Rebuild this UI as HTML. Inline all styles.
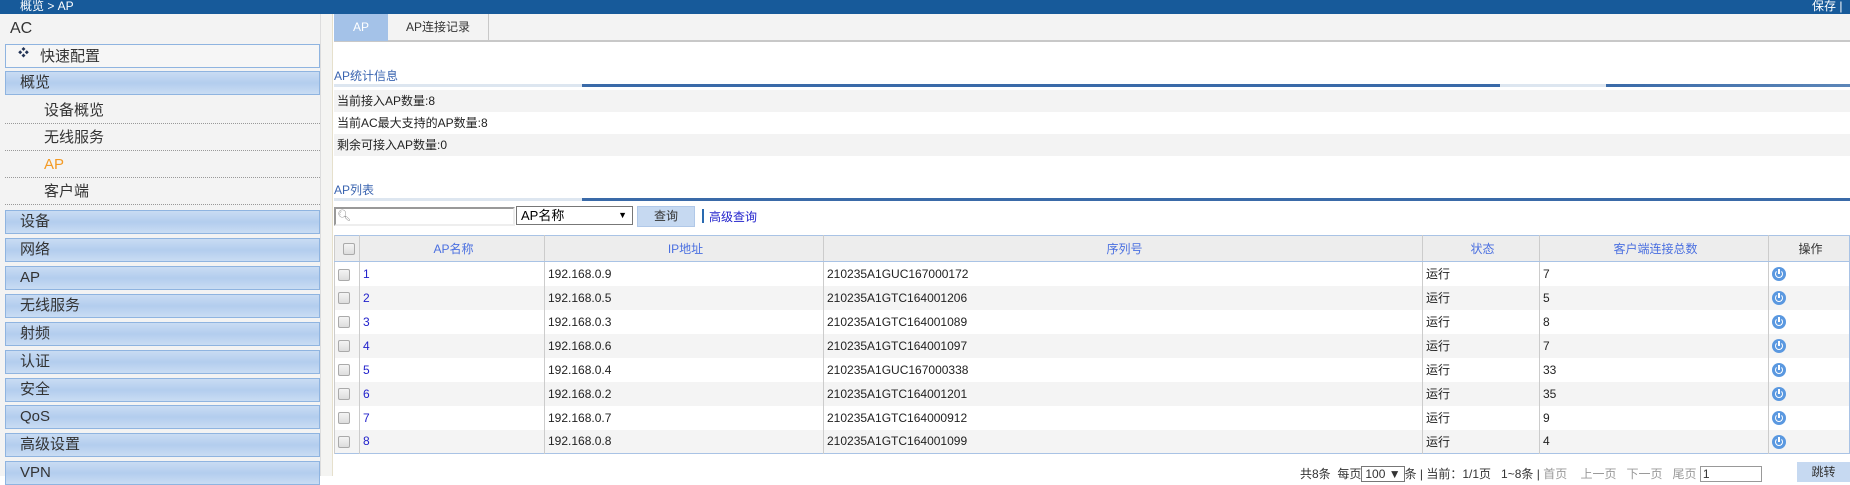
<!DOCTYPE html>
<html><head><meta charset="utf-8"><style>
*{box-sizing:border-box;margin:0;padding:0}
body{width:1850px;height:476px;overflow:hidden;background:#fff;font-family:"Liberation Sans","Noto Sans CJK SC",sans-serif;position:relative}
.abs{position:absolute}
#top{left:0;top:0;width:1850px;height:14px;background:#175a9a;color:#fff;font-size:12px;line-height:13px}
#side{left:0;top:14px;width:321px;height:462px;background:#f3f3f3;border-right:1px solid #ddd}
#gap{left:321px;top:14px;width:12px;height:462px;background:#f4f4f2;border-right:1px solid #e6e0cc}
.hd{position:absolute;left:5px;width:315px;height:24px;border:1px solid #8fb4e0;background:linear-gradient(#c9dcf3,#b3cdee 50%,#c9dcf3);font-size:15px;line-height:22px;padding-left:14px;color:#333}
.sub{position:absolute;left:5px;width:315px;height:27px;border-bottom:1px dotted #999;font-size:15px;line-height:27px;padding-left:39px;color:#333}
.row{position:absolute;left:334px;width:1516px;height:22px;font-size:12px;line-height:22px;padding-left:3px;color:#222}
.line{position:absolute;height:3px}
table{position:absolute;left:334px;top:235px;width:1516px;border-collapse:collapse;font-size:12px;border:1px solid #a9c3e5}
td{height:24px;border-left:1px solid #ccc;padding-left:3px;color:#222;white-space:nowrap}
tr.h td{height:26px;background:#ededed;text-align:center;color:#4a6fe0;border-bottom:1px solid #a9c3e5}
tr:nth-child(odd):not(.h) td{background:#f4f4f4}
.cb{display:inline-block;width:12px;height:12px;border:1px solid #aaa;border-radius:2px;background:linear-gradient(#f4f4f4,#ddd);vertical-align:middle}
.n{color:#22c}
.pw{display:inline-block;width:14px;height:14px;border-radius:7px;background:#5a98e0;vertical-align:middle;position:relative}
.pw:after{content:"";position:absolute;left:3px;top:3px;width:6px;height:6px;border:1.5px solid #fff;border-top-color:transparent;border-radius:50%}
.pw:before{content:"";position:absolute;left:6px;top:2px;width:2px;height:5px;background:#fff;z-index:1}
</style></head><body>
<div id="top" class="abs"><span style="position:absolute;left:20px">概览 &gt; AP</span><span style="position:absolute;left:1812px">保存 |</span></div>
<div id="side" class="abs">
<div style="position:absolute;left:10px;top:6px;font-size:16px;color:#333">AC</div>
<div style="position:absolute;left:5px;top:30px;width:315px;height:24px;border:1px solid #8fb4e0;background:#f6f6f6;font-size:15px;line-height:24px;padding-left:34px;color:#333"><span style="position:absolute;left:12px;top:-4px;font-size:11px;color:#235">❖</span>快速配置</div>
<div class="hd" style="top:57px">概览</div>
<div class="sub" style="top:83px">设备概览</div>
<div class="sub" style="top:110px">无线服务</div>
<div class="sub" style="top:137px;color:#f39a24">AP</div>
<div class="sub" style="top:164px">客户端</div>
<div class="hd" style="top:196px">设备</div>
<div class="hd" style="top:224px">网络</div>
<div class="hd" style="top:252px">AP</div>
<div class="hd" style="top:280px">无线服务</div>
<div class="hd" style="top:308px">射频</div>
<div class="hd" style="top:336px">认证</div>
<div class="hd" style="top:364px">安全</div>
<div class="hd" style="top:391px">QoS</div>
<div class="hd" style="top:419px">高级设置</div>
<div class="hd" style="top:447px">VPN</div>
</div>
<div id="gap" class="abs"></div>
<div class="abs" style="left:334px;top:14px;width:1516px;height:28px;background:#f3f3f3;border-bottom:2px solid #c8c8c8"></div>
<div class="abs" style="left:334px;top:14px;width:54px;height:27px;background:#a4c2e8;color:#fff;font-size:12px;line-height:27px;text-align:center">AP</div>
<div class="abs" style="left:388px;top:14px;width:101px;height:27px;border-right:1px solid #c8c8c8;color:#333;font-size:12px;line-height:27px;text-align:center">AP连接记录</div>
<div class="abs" style="left:334px;top:67px;font-size:12px;color:#3a64b0">AP统计信息</div>
<div class="line" style="left:334px;top:84px;width:248px;background:#dde6f0"></div>
<div class="line" style="left:582px;top:84px;width:1024px;background:#3a6aa8"></div>
<div class="line" style="left:1500px;top:84px;width:106px;background:#dde6f0"></div>
<div class="line" style="left:1606px;top:84px;width:244px;background:linear-gradient(90deg,#3a6aa8,#5c86b8)"></div>
<div class="row" style="top:90px;background:#f3f3f3">当前接入AP数量:8</div>
<div class="row" style="top:112px">当前AC最大支持的AP数量:8</div>
<div class="row" style="top:134px;background:#f3f3f3">剩余可接入AP数量:0</div>
<div class="abs" style="left:334px;top:181px;font-size:12px;color:#3a64b0">AP列表</div>
<div class="line" style="left:334px;top:198px;width:248px;background:#dde6f0"></div>
<div class="line" style="left:582px;top:198px;width:1268px;background:#3a6aa8"></div>
<div class="abs" style="left:334px;top:207px;width:181px;height:19px;border:2px solid #999;border-right-color:#eee;border-bottom-color:#eee;background:#fff;font-size:11px;color:#888;padding-left:1px">&#x1F50D;&#xFE0E;</div>
<div class="abs" style="left:516px;top:206px;width:117px;height:19px;border:1px solid #777;background:#fff;font-size:13px;line-height:17px;padding-left:4px">AP名称<span style="position:absolute;right:5px;font-size:9px">▼</span></div>
<div class="abs" style="left:637px;top:206px;width:58px;height:21px;background:#c6d9f1;border:1px solid #b0c8e8;font-size:12px;line-height:19px;text-align:center;color:#333">查询</div>
<div class="abs" style="left:702px;top:209px;width:2px;height:14px;background:#2a6ab0"></div>
<div class="abs" style="left:709px;top:208px;font-size:12px;color:#22c">高级查询</div>
<table>
<colgroup><col style="width:25px"><col style="width:185px"><col style="width:279px"><col style="width:599px"><col style="width:117px"><col style="width:229px"><col></colgroup>
<tr class="h"><td><span class="cb"></span></td><td>AP名称</td><td>IP地址</td><td>序列号</td><td>状态</td><td>客户端连接总数</td><td style="color:#333">操作</td></tr>
<tr><td><span class="cb"></span></td><td class="n">1</td><td>192.168.0.9</td><td>210235A1GUC167000172</td><td>运行</td><td>7</td><td><span class="pw"></span></td></tr>
<tr><td><span class="cb"></span></td><td class="n">2</td><td>192.168.0.5</td><td>210235A1GTC164001206</td><td>运行</td><td>5</td><td><span class="pw"></span></td></tr>
<tr><td><span class="cb"></span></td><td class="n">3</td><td>192.168.0.3</td><td>210235A1GTC164001089</td><td>运行</td><td>8</td><td><span class="pw"></span></td></tr>
<tr><td><span class="cb"></span></td><td class="n">4</td><td>192.168.0.6</td><td>210235A1GTC164001097</td><td>运行</td><td>7</td><td><span class="pw"></span></td></tr>
<tr><td><span class="cb"></span></td><td class="n">5</td><td>192.168.0.4</td><td>210235A1GUC167000338</td><td>运行</td><td>33</td><td><span class="pw"></span></td></tr>
<tr><td><span class="cb"></span></td><td class="n">6</td><td>192.168.0.2</td><td>210235A1GTC164001201</td><td>运行</td><td>35</td><td><span class="pw"></span></td></tr>
<tr><td><span class="cb"></span></td><td class="n">7</td><td>192.168.0.7</td><td>210235A1GTC164000912</td><td>运行</td><td>9</td><td><span class="pw"></span></td></tr>
<tr><td><span class="cb"></span></td><td class="n">8</td><td>192.168.0.8</td><td>210235A1GTC164001099</td><td>运行</td><td>4</td><td><span class="pw"></span></td></tr>
</table>
<div class="abs" style="left:1300px;top:465px;font-size:12px;color:#333;white-space:nowrap">共8条&nbsp; 每页<span style="display:inline-block;border:1px solid #777;padding:0 3px">100 ▼</span>条 | 当前：1/1页&nbsp;&nbsp; 1~8条 | <span style="color:#999">首页&nbsp;&nbsp;&nbsp; 上一页&nbsp;&nbsp; 下一页&nbsp;&nbsp; 尾页</span> <span style="display:inline-block;width:62px;border:1px solid #999;padding-left:2px">1</span></div>
<div class="abs" style="left:1797px;top:462px;width:53px;height:20px;background:#c6d9f1;font-size:12px;line-height:20px;text-align:center;color:#333">跳转</div>
</body></html>
